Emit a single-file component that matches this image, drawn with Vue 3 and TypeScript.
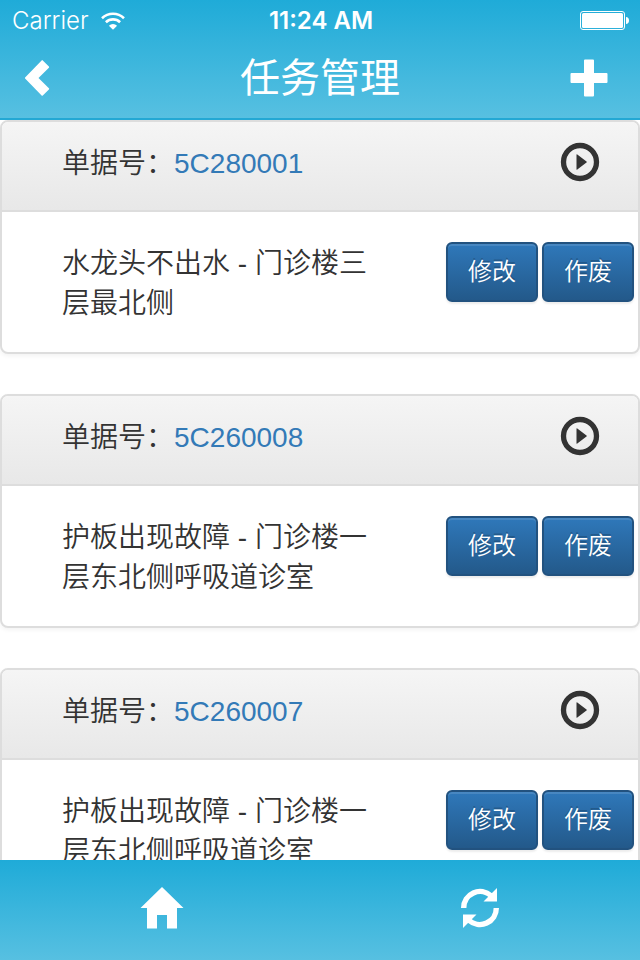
<script setup lang="ts">
import { ref } from 'vue'

interface Task {
  code: string
  description: string
}

const tasks = ref<Task[]>([
  { code: '5C280001', description: '水龙头不出水 - 门诊楼三层最北侧' },
  { code: '5C260008', description: '护板出现故障 - 门诊楼一层东北侧呼吸道诊室' },
  { code: '5C260007', description: '护板出现故障 - 门诊楼一层东北侧呼吸道诊室' },
])
</script>

<template>
  <div class="screen">
    <header class="top">
      <div class="status">
        <div class="carrier">
          <span>Carrier</span>
          <svg class="wifi" viewBox="0 0 24 18" aria-hidden="true">
            <path d="M1 6.2a16 16 0 0 1 22 0M4.9 10.2a10.4 10.4 0 0 1 14.2 0" fill="none" stroke="currentColor" stroke-width="2.6" />
            <path d="M12 17.8l-4.1-4.1a6 6 0 0 1 8.2 0z" fill="currentColor" />
          </svg>
        </div>
        <span class="clock">11:24 AM</span>
        <div class="power">
          <svg class="battery" viewBox="0 0 50 20" aria-hidden="true">
            <rect x="0.5" y="0.5" width="44" height="18" rx="2.5" fill="none" stroke="currentColor" stroke-width="1" />
            <rect x="2" y="2" width="41" height="15" rx="1.5" fill="currentColor" />
            <path d="M46 6c1.800 0 3 1.400 3 3.500s-1.200 3.500-3 3.500z" fill="currentColor" />
          </svg>
        </div>
      </div>
      <nav class="bar">
        <button class="icon-button" type="button" aria-label="返回">
          <svg class="back" viewBox="0 0 26 38" aria-hidden="true">
            <path d="M18.8 1.4l6.100 6.100q.6.6 0 1.200L14.500 19l10.400 10.200q.6.6 0 1.200l-6.100 6.100q-.6.6-1.200 0L1.100 19.600q-.6-.6 0-1.200L17.600 1.400q.6-.6 1.200 0z" fill="currentColor" />
          </svg>
        </button>
        <h1>任务管理</h1>
        <button class="icon-button add" type="button" aria-label="新增">
          <svg class="plus" viewBox="0 0 38 38" aria-hidden="true">
            <path d="M15 .5h8q1 0 1 1V14h12.500q1 0 1 1v8q0 1-1 1H24v12.500q0 1-1 1h-8q-1 0-1-1V24H1.500q-1 0-1-1v-8q0-1 1-1H14V1.500q0-1 1-1z" fill="currentColor" />
          </svg>
        </button>
      </nav>
    </header>

    <main class="list">
      <article v-for="task in tasks" :key="task.code" class="card">
        <div class="heading">
          <div class="text">单据号：<a href="#">{{ task.code }}</a></div>
          <button class="play" type="button" aria-label="开始">
            <svg viewBox="0 0 40 40" aria-hidden="true">
              <circle cx="20" cy="20" r="16.500" fill="none" stroke="currentColor" stroke-width="5.300" />
              <path d="M16.500 12.800v14.400q0 1 .8.400l9.200-7q.8-.6 0-1.200l-9.200-7q-.8-.6-.8.400z" fill="currentColor" />
            </svg>
          </button>
        </div>
        <div class="body">
          <p class="text">{{ task.description }}</p>
          <div class="actions">
            <button class="btn" type="button">修改</button>
            <button class="btn" type="button">作废</button>
          </div>
        </div>
      </article>
    </main>

    <footer class="tabs">
      <button type="button" aria-label="首页">
        <svg viewBox="-2 0 44 44" aria-hidden="true">
          <path d="M22 1L43.500 22H37v20.500H27V29H17v13.500H7V22H.5z" fill="currentColor" />
        </svg>
      </button>
      <button type="button" aria-label="刷新">
        <svg viewBox="0 0 44 44" aria-hidden="true">
          <path d="M5.700 22A16.300 16.300 0 0 1 33 9.800" fill="none" stroke="currentColor" stroke-width="5.400" />
          <path d="M39 2v13.500H25.500z" fill="currentColor" />
          <path d="M38.300 22A16.300 16.300 0 0 1 11 34.200" fill="none" stroke="currentColor" stroke-width="5.400" />
          <path d="M5 42V28.500h13.500z" fill="currentColor" />
        </svg>
      </button>
    </footer>
  </div>
</template>

<style>
body {
  margin: 0;
}
</style>

<style scoped>
* {
  box-sizing: border-box;
}

.screen {
  display: flex;
  flex-direction: column;
  height: 100vh;
  overflow: hidden;
  background: #fff;
  color: #333;
  font-family: "Liberation Sans", "Noto Sans CJK SC", sans-serif;
  font-size: 28px;
  font-weight: 350;
  line-height: 40px;
}

button {
  font: inherit;
  color: inherit;
  padding: 0;
  border: 0;
  background: none;
  cursor: pointer;
}

svg {
  display: block;
  overflow: visible;
}

.top {
  flex: none;
  color: #fff;
  background: linear-gradient(#1fabd8, #57c0e1);
  border-bottom: 2px solid #23a8d4;
}

.status {
  display: grid;
  grid-template-columns: 1fr auto 1fr;
  align-items: center;
  height: 42px;
  padding: 0 10px 0 12px;
  font-family: Inter, "Liberation Sans", sans-serif;
  font-size: 24px;
  font-weight: 300;
}

.carrier {
  display: flex;
  align-items: center;
  gap: 12px;
}

.wifi {
  width: 24px;
  height: 18px;
}

.clock {
  font-weight: 600;
}

.power {
  display: flex;
  justify-content: flex-end;
}

.battery {
  width: 50px;
  height: 20px;
}

.bar {
  display: grid;
  grid-template-columns: 1fr auto 1fr;
  align-items: center;
  height: 76px;
  padding: 0 24px 4px;
}

h1 {
  margin: 0;
  font-size: 40px;
  font-weight: 400;
  line-height: 56px;
}

.icon-button {
  justify-self: start;
}

.add {
  justify-self: end;
  padding-right: 8px;
}

.back {
  width: 26px;
  height: 38px;
}

.plus {
  width: 38px;
  height: 38px;
}

.list {
  flex: 1;
  min-height: 0;
  overflow: hidden;
}

.card {
  margin-bottom: 40px;
  border: 2px solid #ddd;
  border-radius: 8px;
  background: #fff;
  box-shadow: 0 2px 4px rgba(0, 0, 0, 0.05);
}

.heading {
  display: flex;
  align-items: flex-start;
  justify-content: space-between;
  padding: 20px 38px 26px 60px;
  border-bottom: 2px solid #ddd;
  border-radius: 6px 6px 0 0;
  background: linear-gradient(#f5f5f5, #e8e8e8);
}

.heading a {
  color: #337ab7;
  text-decoration: none;
}

.text {
  margin: 0;
  padding-top: 2px;
}

.play svg {
  width: 40px;
  height: 40px;
}

.body {
  display: flex;
  justify-content: space-between;
  padding: 30px 4px 28px 60px;
}

.body .text {
  flex: 0 1 320px;
}

.actions {
  display: flex;
  flex: none;
  align-items: flex-start;
  gap: 4px;
}

.btn {
  width: 92px;
  height: 60px;
  border: 2px solid #22527f;
  border-radius: 6px;
  background: linear-gradient(#2f78ba, #23598a);
  box-shadow: inset 0 2px 0 rgba(255, 255, 255, 0.12), 0 2px 2px rgba(0, 0, 0, 0.075);
  color: #fff;
  font-size: 24px;
  line-height: 36px;
  text-shadow: 0 -2px 0 rgba(0, 0, 0, 0.2);
}

.tabs {
  display: flex;
  flex: none;
  height: 100px;
  color: #fff;
  background: linear-gradient(#1fabd8, #57c0e1);
}

.tabs button {
  display: flex;
  flex: 1;
  align-items: center;
  justify-content: center;
  padding-bottom: 4px;
}

.tabs svg {
  width: 44px;
  height: 44px;
}
</style>
